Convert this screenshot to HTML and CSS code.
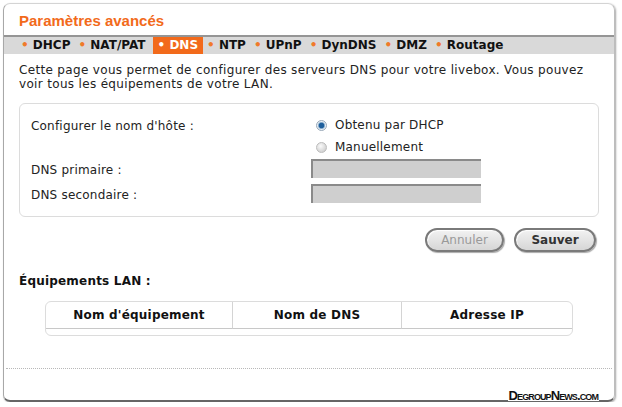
FILE: index.html
```html
<!DOCTYPE html>
<html lang="fr">
<head>
<meta charset="utf-8">
<title>Paramètres avancés</title>
<link rel="stylesheet" href="styles.css">
</head>
<body>
<div class="panel">
  <h1 class="title">Paramètres avancés</h1>
  <nav class="tabs">
    <span class="tab"><i>•</i> DHCP</span>
    <span class="tab"><i>•</i> NAT/PAT</span>
    <span class="tab active"><i>•</i> DNS</span>
    <span class="tab"><i>•</i> NTP</span>
    <span class="tab"><i>•</i> UPnP</span>
    <span class="tab"><i>•</i> DynDNS</span>
    <span class="tab"><i>•</i> DMZ</span>
    <span class="tab"><i>•</i> Routage</span>
  </nav>
  <div class="content">
    <p class="intro">Cette page vous permet de configurer des serveurs DNS pour votre livebox. Vous pouvez voir tous les équipements de votre LAN.</p>
    <div class="box">
      <div class="row row-host">
        <span class="label">Configurer le nom d'hôte :</span>
        <div class="radios">
          <label class="radio"><span class="dot on"></span>Obtenu par DHCP</label>
          <label class="radio"><span class="dot"></span>Manuellement</label>
        </div>
      </div>
      <div class="row">
        <span class="label low">DNS primaire :</span>
        <span class="field"></span>
      </div>
      <div class="row">
        <span class="label low">DNS secondaire :</span>
        <span class="field"></span>
      </div>
    </div>
    <div class="actions">
      <span class="btn cancel">Annuler</span>
      <span class="btn save">Sauver</span>
    </div>
    <h2 class="subtitle">Équipements LAN :</h2>
    <div class="table">
      <div class="th">Nom d'équipement</div>
      <div class="th">Nom de DNS</div>
      <div class="th">Adresse IP</div>
    </div>
  </div>
  <div class="footer"></div>
  <span class="mark">DegroupNews.com</span>
</div>
</body>
</html>
```

FILE: styles.css
```css
html, body {
  margin: 0;
  padding: 0;
  background: #fff;
}
body {
  padding: 3px 0 0 3px;
  font-family: "DejaVu Sans", Verdana, sans-serif;
  font-size: 12px;
  color: #333;
}
.panel {
  width: 612px;
  height: 399px;
  box-sizing: border-box;
  border: 1px solid #d4d4d4;
  border-left-color: #a8a8a8;
  border-right-color: #bdbdbd;
  border-bottom: 2px solid #666;
  border-radius: 7px;
  box-shadow: 1px 1px 2px rgba(0,0,0,0.35);
  position: relative;
  display: flex;
  flex-direction: column;
}
.title {
  margin: 0;
  height: 31px;
  padding: 8px 0 0 15px;
  box-sizing: border-box;
  font-family: "Liberation Sans", Arial, sans-serif;
  font-size: 15px;
  font-weight: bold;
  color: #f26a1b;
}
.tabs {
  border-top: 2px solid #959595;
  background: #d9d9d9;
  height: 17px;
  display: flex;
  padding-left: 13px;
  font-weight: bold;
  font-size: 12px;
  color: #111;
  line-height: 17px;
}
.tab {
  padding: 0 4px;
  white-space: pre;
}
.tab i {
  font-style: normal;
  color: #f07a2a;
}
.tab.active {
  background: #f26a1b;
  color: #fff;
  padding: 0 5px;
  margin-left: 3px;
}
.tab.active i {
  color: #fff;
}
.content {
  padding: 0 13px 0 15px;
}
.intro {
  margin: 9px 0 0 0;
  line-height: 14px;
  color: #222;
  letter-spacing: 0.33px;
}
.box {
  margin-top: 12px;
  width: 580px;
  box-sizing: border-box;
  border: 1px solid #dcdcdc;
  border-radius: 6px;
  padding: 15px 0 10px 11px;
}
.row {
  display: flex;
  align-items: center;
  height: 25px;
}
.row-host {
  align-items: flex-start;
  height: 37px;
}
.label {
  width: 280px;
  line-height: 15px;
  color: #222;
  letter-spacing: 0.2px;
}
.label.low {
  padding-top: 3px;
}
.radios {
  display: flex;
  flex-direction: column;
  gap: 7px;
  padding-left: 5px;
  margin-top: -1px;
}
.radio {
  display: flex;
  align-items: center;
  gap: 8px;
  line-height: 15px;
  color: #222;
  letter-spacing: 0.2px;
}
.dot {
  width: 11px;
  height: 11px;
  border-radius: 50%;
  background: radial-gradient(circle at 40% 35%, #fafafa, #c4c4c4);
  border: 1px solid #bcbcbc;
  box-sizing: border-box;
}
.dot.on {
  background: radial-gradient(circle at 50% 50%, #1f5f9c 0 2.5px, #7fa6c8 3px, #e6eef5 4px);
  border-color: #98a8b8;
}
.field {
  width: 170px;
  height: 19px;
  box-sizing: border-box;
  background: #cfcfcf;
  border-top: 2px solid #8a8a8a;
  border-left: 2px solid #8a8a8a;
}
.actions {
  display: flex;
  justify-content: flex-end;
  gap: 10px;
  margin-top: 11px;
  padding-right: 5px;
}
.btn {
  width: 79px;
  height: 24px;
  box-sizing: border-box;
  border-radius: 12px;
  border: 2px solid #7a7a7a;
  background: linear-gradient(#f2f2f2, #d6d6d6);
  box-shadow: inset 1px 1px 1px #fff, 1px 1px 1px #aaa;
  display: flex;
  align-items: center;
  justify-content: center;
  font-size: 12px;
}
.cancel {
  color: #999;
}
.save {
  color: #333;
  font-weight: bold;
  width: 82px;
}
.subtitle {
  margin: 22px 0 0 0;
  font-size: 12px;
  line-height: 15px;
  font-weight: bold;
  color: #111;
  letter-spacing: 0.2px;
}
.table {
  margin: 12px 0 0 26px;
  width: 528px;
  height: 35px;
  box-sizing: border-box;
  border: 1px solid #dcdcdc;
  border-radius: 6px;
  display: grid;
  grid-template-columns: 186px 169px 1fr;
  align-items: start;
}
.th {
  height: 26px;
  border-bottom: 1px solid #c8c8c8;
  text-align: center;
  line-height: 26px;
  font-weight: bold;
  color: #111;
  letter-spacing: 0.2px;
}
.th + .th {
  border-left: 1px solid #d4d4d4;
}
.footer {
  border-top: 1px dotted #b8b8b8;
  margin: 32px 2px 0;
}
.mark {
  position: absolute;
  right: 15px;
  bottom: -1px;
  font-family: "Liberation Sans", Arial, sans-serif;
  font-weight: bold;
  font-size: 13px;
  font-variant: small-caps;
  letter-spacing: -0.9px;
  color: #111;
  background: #fff;
  padding: 0 1px;
  line-height: 10px;
}
```
